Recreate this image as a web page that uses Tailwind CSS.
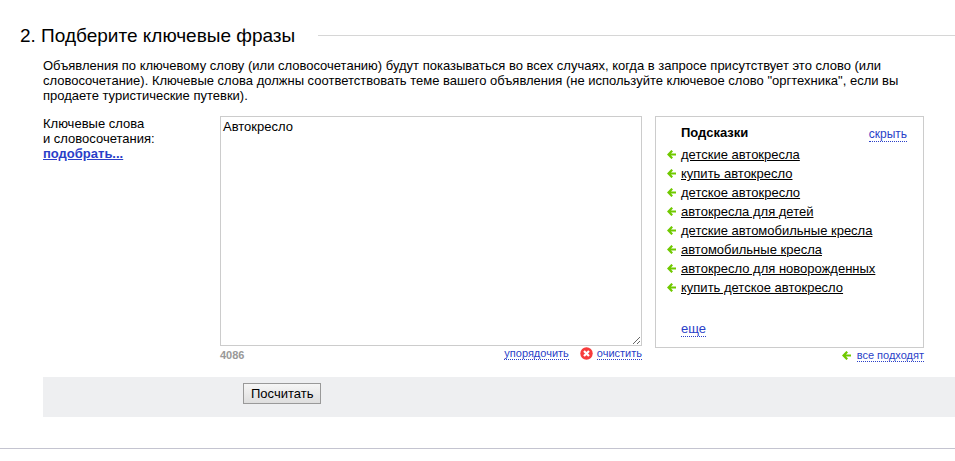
<!DOCTYPE html>
<html lang="ru">
<head>
<meta charset="utf-8">
<meta name="viewport" content="width=device-width, initial-scale=1">
<title>Подберите ключевые фразы</title>
<script src="https://cdn.jsdelivr.net/npm/@tailwindcss/browser@4"></script>
</head>
<body class="bg-white font-['Liberation_Sans',Arial,sans-serif] text-[13px] leading-[15px] text-black">
<svg class="hidden" aria-hidden="true">
  <symbol id="arrow" viewBox="0 0 9 9">
    <path d="M9 4.5H1.8M5.2 .7 1.5 4.5 5.2 8.3" fill="none" stroke="#70c900" stroke-width="2.2"/>
  </symbol>
</svg>
<main>
  <section class="pt-6">
    <header class="flex items-center gap-[23px] pl-5">
      <h2 class="text-[19px] leading-[23px]">2. Подберите ключевые фразы</h2>
      <div class="h-px grow bg-[#d6d6d6]"></div>
    </header>
    <p class="mt-[11px] pr-8 pl-[43px]">Объявления по ключевому слову (или словосочетанию) будут показываться во всех случаях, когда в запросе присутствует это слово (или словосочетание). Ключевые слова должны соответствовать теме вашего объявления (не используйте ключевое слово "оргтехника", если вы продаете туристические путевки).</p>

    <form class="mt-[13px]">
      <div class="flex items-start pr-[31px] pl-[43px]">
        <div class="w-[177px] shrink-0">
          <label for="keywords" class="block">Ключевые слова<br>и словосочетания:</label>
          <a href="#" class="font-bold text-[#2a3fc8] underline">подобрать...</a>
        </div>
        <div class="grow">
          <textarea id="keywords" class="block h-[230px] w-full resize border border-[#cccccc] bg-white px-0.5 py-0.5">Автокресло</textarea>
          <div class="mt-px flex items-start text-[11px] leading-4">
            <span class="grow font-bold text-[#999999]">4086</span>
            <a href="#" class="border-b border-dotted border-[#2a3fc8] leading-3 text-[#2a3fc8]">упорядочить</a>
            <svg class="mr-1 ml-[11px] size-[13px]" viewBox="0 0 13 13" aria-hidden="true">
              <circle cx="6.5" cy="6.5" r="6.2" fill="#f73c3c"/>
              <path d="M4 4l5 5M9 4L4 9" stroke="#fff" stroke-width="2.2"/>
            </svg>
            <a href="#" class="border-b border-dotted border-[#2a3fc8] leading-3 text-[#2a3fc8]">очистить</a>
          </div>
        </div>
        <aside class="ml-[13px] w-[269px] shrink-0">
          <div class="h-[232px] border border-[#cccccc] pt-2 pr-4 pl-[11px]">
            <div class="flex items-start justify-between pl-[14px]">
              <h3 class="font-bold">Подсказки</h3>
              <a href="#" class="mt-[3px] border-b border-dotted border-[#2a3fc8] text-[12px] leading-[13px] text-[#2a3fc8]">скрыть</a>
            </div>
            <ul class="mt-[3px] leading-[19px]">
              <li class="flex items-center gap-[5px]"><svg class="size-[9px]" aria-hidden="true"><use href="#arrow"/></svg><a href="#" class="underline">детские автокресла</a></li>
              <li class="flex items-center gap-[5px]"><svg class="size-[9px]" aria-hidden="true"><use href="#arrow"/></svg><a href="#" class="underline">купить автокресло</a></li>
              <li class="flex items-center gap-[5px]"><svg class="size-[9px]" aria-hidden="true"><use href="#arrow"/></svg><a href="#" class="underline">детское автокресло</a></li>
              <li class="flex items-center gap-[5px]"><svg class="size-[9px]" aria-hidden="true"><use href="#arrow"/></svg><a href="#" class="underline">автокресла для детей</a></li>
              <li class="flex items-center gap-[5px]"><svg class="size-[9px]" aria-hidden="true"><use href="#arrow"/></svg><a href="#" class="underline">детские автомобильные кресла</a></li>
              <li class="flex items-center gap-[5px]"><svg class="size-[9px]" aria-hidden="true"><use href="#arrow"/></svg><a href="#" class="underline">автомобильные кресла</a></li>
              <li class="flex items-center gap-[5px]"><svg class="size-[9px]" aria-hidden="true"><use href="#arrow"/></svg><a href="#" class="underline">автокресло для новорожденных</a></li>
              <li class="flex items-center gap-[5px]"><svg class="size-[9px]" aria-hidden="true"><use href="#arrow"/></svg><a href="#" class="underline">купить детское автокресло</a></li>
            </ul>
            <div class="mt-[25px] flex pl-[14px]">
              <a href="#" class="border-b border-dotted border-[#2a3fc8] leading-[14px] text-[#2a3fc8]">еще</a>
            </div>
          </div>
          <div class="mt-px flex items-center justify-end gap-1.5 text-[11px] leading-3">
            <svg class="size-[9px]" aria-hidden="true"><use href="#arrow"/></svg>
            <a href="#" class="border-b border-dotted border-[#2a3fc8] text-[#2a3fc8]">все подходят</a>
          </div>
        </aside>
      </div>
      <div class="mt-[14px] ml-[43px] h-10 bg-[#eeeff1] pt-1.5 pl-[200px]">
        <button type="submit" class="h-[21px] border border-[#999999] bg-linear-to-b from-[#f6f6f6] to-[#dedede] px-[7px] leading-[19px]">Посчитать</button>
      </div>
    </form>
  </section>
  <hr class="mt-[31px] border-t border-[#c4c4d0]">
</main>
</body>
</html>
